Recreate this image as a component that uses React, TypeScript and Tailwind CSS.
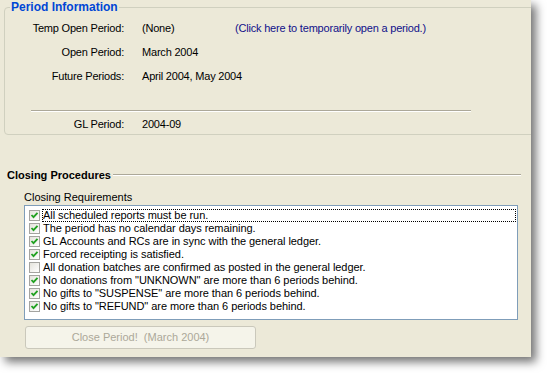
const requirements = [
  { text: 'All scheduled reports must be run.', checked: true },
  { text: 'The period has no calendar days remaining.', checked: true },
  { text: 'GL Accounts and RCs are in sync with the general ledger.', checked: true },
  { text: 'Forced receipting is satisfied.', checked: true },
  { text: 'All donation batches are confirmed as posted in the general ledger.', checked: false },
  { text: 'No donations from "UNKNOWN" are more than 6 periods behind.', checked: true },
  { text: 'No gifts to "SUSPENSE" are more than 6 periods behind.', checked: true },
  { text: 'No gifts to "REFUND" are more than 6 periods behind.', checked: true },
];

const periodRows = [
  { label: 'Temp Open Period:', value: '(None)', link: true },
  { label: 'Open Period:', value: 'March 2004' },
  { label: 'Future Periods:', value: 'April 2004, May 2004' },
];

function CheckBox({ checked }: { checked: boolean }) {
  return (
    <span className="w-[11px] h-[11px] shrink-0 border border-[#a4a4a0] bg-gradient-to-br from-[#e4e3dc] to-white flex items-center justify-center">
      {checked && (
        <svg width="9" height="9" viewBox="0 0 9 9">
          <path d="M1.5 4 L3.5 6.2 L7.5 1.8" fill="none" stroke="#21a121" strokeWidth="1.8" />
        </svg>
      )}
    </span>
  );
}

export default function App() {
  return (
    <div className="w-[547px] h-[373px] bg-white font-['Liberation_Sans',Arial,sans-serif] text-[11px] text-black">
      <div className="w-[531px] h-[357px] bg-[#ece9d8] overflow-hidden shadow-[5px_5px_9px_rgba(0,0,0,0.55)]">
        {/* period info */}
        <fieldset className="ml-[4px] w-[535px] border border-[#d0d0bf] rounded-[4px] pb-[3px]">
          <legend className="ml-[5px] px-px text-[12px] leading-[14px] font-bold text-[#0046d5]">
            Period Information
          </legend>
          <div className="pt-[2px] tracking-[-0.2px]">
            {periodRows.map((row) => (
              <div key={row.label} className="flex items-center h-6 whitespace-nowrap">
                <span className="w-[119px] shrink-0 text-right">{row.label}</span>
                <span className="ml-[18px] w-[93px] shrink-0">{row.value}</span>
                {row.link && (
                  <a href="#" className="text-[#10108a]">
                    (Click here to temporarily open a period.)
                  </a>
                )}
              </div>
            ))}
          </div>
          <div className="ml-[26px] w-[440px] mt-[22px] border-t border-t-[#aca899] border-b border-b-white" />
          <div className="flex items-center h-[14px] mt-[5px] tracking-[-0.2px]">
            <span className="w-[119px] text-right">GL Period:</span>
            <span className="ml-[18px]">2004-09</span>
          </div>
        </fieldset>

        {/* closing procedures */}
        <div className="flex items-center h-[14px] mt-[33px] pl-[7px]">
          <span className="font-bold">Closing Procedures</span>
          <div className="ml-[2px] w-[408px] border-t border-t-[#aca899] border-b border-b-white" />
        </div>
        <div className="pl-[24px] mt-[8px] leading-[14px]">Closing Requirements</div>
        <div className="ml-[24px] mt-px w-[494px] h-[115px] bg-white border border-[#7f9db9] pt-[3px] pl-[4px] pr-[1px] tracking-[-0.05px]">
          {requirements.map((req, i) => (
            <div key={req.text} className="flex items-center h-[13px]">
              <CheckBox checked={req.checked} />
              <span
                className={
                  'ml-[2px] flex-1 leading-[13px] pl-px ' +
                  (i === 0 ? 'outline outline-1 outline-dotted outline-black -outline-offset-1' : '')
                }
              >
                {req.text}
              </span>
            </div>
          ))}
        </div>
        <button
          disabled
          className="ml-[25px] mt-[6px] w-[231px] h-[23px] rounded-[3px] border border-[#cac8bb] bg-[#f5f4ea] text-[#aca899] text-[11px]"
        >
          Close Period!&nbsp; (March 2004)
        </button>
      </div>
    </div>
  );
}
